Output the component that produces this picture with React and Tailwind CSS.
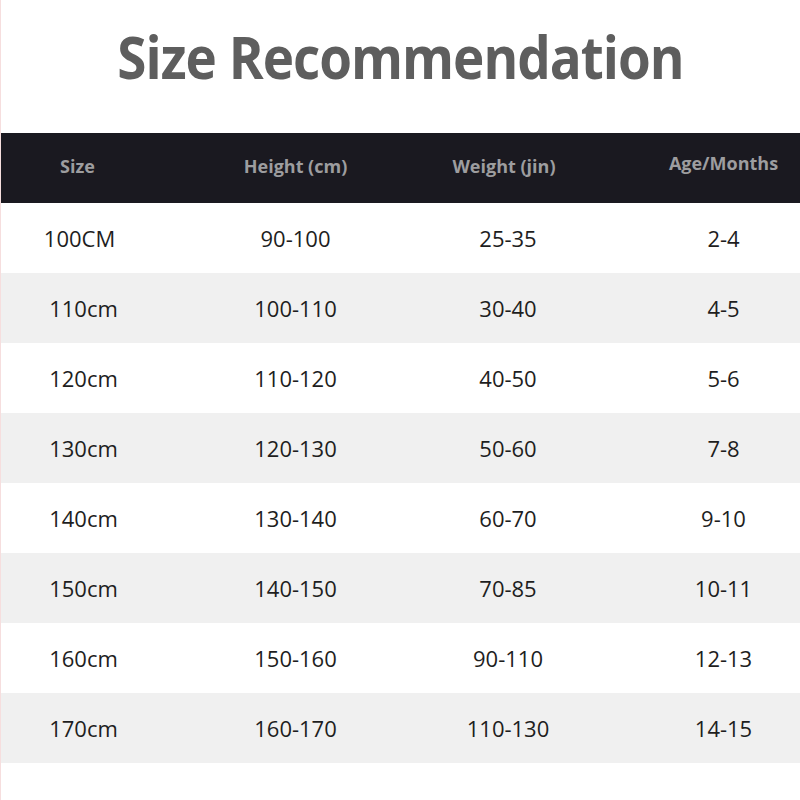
const rows = [
  ['100CM', '90-100', '25-35', '2-4'],
  ['110cm', '100-110', '30-40', '4-5'],
  ['120cm', '110-120', '40-50', '5-6'],
  ['130cm', '120-130', '50-60', '7-8'],
  ['140cm', '130-140', '60-70', '9-10'],
  ['150cm', '140-150', '70-85', '10-11'],
  ['160cm', '150-160', '90-110', '12-13'],
  ['170cm', '160-170', '110-130', '14-15'],
]

const cols = 'grid grid-cols-[157px_275px_150px_1fr] items-center'

export default function App() {
  return (
    <div className="w-[800px] h-[800px] bg-white border-l border-[#f6dede] font-['Open_Sans',sans-serif] overflow-hidden">
      <div className="h-[133px] flex items-center justify-center">
        <h1 className="text-[53px] font-bold text-[#5e5e5e] tracking-[-1px] -mt-[20px] leading-none scale-y-110">
          Size Recommendation
        </h1>
      </div>
      <div className={`${cols} h-[70px] bg-[#1a1920] text-[18px] font-bold text-[#9d9d9f]`}>
        <div className="text-center -mt-[4px] -ml-[4px]">Size</div>
        <div className="text-center -mt-[4px]">Height (cm)</div>
        <div className="text-center -ml-[8px] -mt-[4px]">Weight (jin)</div>
        <div className="text-center pl-[64px] -mt-[10px]">Age/Months</div>
      </div>
      {rows.map((r, i) => (
        <div
          key={r[0]}
          className={`${cols} h-[70px] text-[22px] text-[#1e1e1e] ${i % 2 ? 'bg-[#f0f0f0]' : 'bg-white'}`}
        >
          <div className={`text-center ${i === 0 ? '' : 'pl-[8px]'}`}>{r[0]}</div>
          <div className="text-center">{r[1]}</div>
          <div className="text-center">{r[2]}</div>
          <div className="text-center pl-[64px]">{r[3]}</div>
        </div>
      ))}
    </div>
  )
}
